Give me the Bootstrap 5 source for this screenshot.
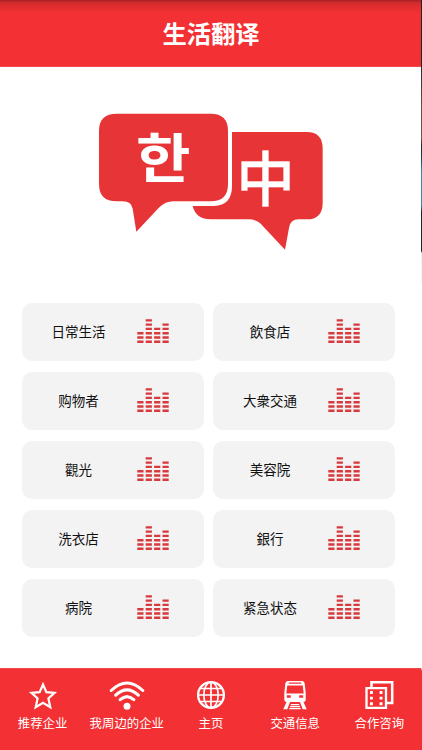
<!DOCTYPE html>
<html lang="zh-CN">
<head>
<meta charset="utf-8">
<meta name="viewport" content="width=device-width, initial-scale=1">
<title>生活翻译</title>
<link href="https://cdn.jsdelivr.net/npm/bootstrap@5.3.0/dist/css/bootstrap.min.css" rel="stylesheet">
<style>
body{font-family:"Noto Sans CJK SC",sans-serif;width:422px;height:750px;color:#111}
.screen{width:421px}
.edge{width:1px;background:linear-gradient(#222 0,#222 60px,#5a4c3c 100px,#6b5c42 138px,#222 146px,#244 158px,#3a8ea8 172px,#3a8ea8 205px,#222 212px,#222 251px,#e8f0f2 253px,#f4f6f6 282px,#fff 283px,#fff 668px,#f33033 671px)}
.topbar{height:67px;background:linear-gradient(#a61f24 0,#c8292c 2px,#dc2c2f 5px,#f33033 13px);border-bottom:1px solid #f0484b}
.topbar h1{font-size:24.3px;line-height:36px;padding-left:1px}
.hero{width:240px;height:160px;margin:33px 0 0 90px}
.tiles{display:grid;grid-template-columns:182px 182px;gap:11px 9.5px;margin:43.3px 0 0 21.5px}
.tile{height:58px;border-radius:10px;background:#f3f3f3;padding-bottom:2px}
.tile span{width:114px;font-size:13.5px;line-height:20px}
.tile svg{width:32px;height:24px;margin-left:1px}
.tabs{height:82px;background:#f33033;border-top:1px solid #f0484b;color:#fff}
.tabs a{width:20%;padding:11px 0 0 1px;font-size:12.4px;line-height:18px}
.tabs svg{width:40px;height:32px;margin-bottom:2px}
</style>
<script src="https://cdn.jsdelivr.net/npm/bootstrap@5.3.0/dist/js/bootstrap.bundle.min.js"></script>
</head>
<body class="d-flex overflow-hidden bg-white">
<svg width="0" height="0" class="position-absolute">
 <defs>
  <symbol id="eq" viewBox="0 0 32 24">
   <g stroke="#d8393c" stroke-width="6.2" fill="none" stroke-dasharray="2.4 1.86">
    <path d="M3.4 23.9V12.4M11.8 23.9V0M20.2 23.9V8.2M28.6 23.9V4"/>
   </g>
  </symbol>
 </defs>
</svg>
<div class="screen d-flex flex-column">
 <header class="topbar d-flex align-items-center justify-content-center flex-shrink-0">
  <h1 class="text-white fw-bold m-0">生活翻译</h1>
 </header>
 <svg class="hero flex-shrink-0" viewBox="0 0 720 480">
  <g fill="#e73537">
   <path d="M426 96H650Q698 96 698 146V308Q698 358 650 358H626Q600 358 597 384L585 449L519 379Q502 358 476 358H362Q318 358 308 318H372Q426 316 426 258Z"/>
   <path d="M80 41H362Q414 41 414 93V252Q414 304 362 304H250Q226 304 208 322L139 395L128 326Q124 304 98 304H80Q27 304 27 252V93Q27 41 80 41Z"/>
  </g>
  <text transform="translate(220 234) scale(1.04 .94)" text-anchor="middle" fill="#fff" font-size="171" font-weight="700" font-family="'Noto Sans CJK KR',sans-serif">한</text>
  <text x="527" y="303" text-anchor="middle" fill="#fff" font-size="176" font-weight="500" font-family="'Noto Sans CJK KR',sans-serif" stroke="#fff" stroke-width="1">中</text>
 </svg>
 <main class="tiles">
  <div class="tile d-flex align-items-center"><span class="text-center">日常生活</span><svg><use href="#eq"/></svg></div>
  <div class="tile d-flex align-items-center"><span class="text-center">飲食店</span><svg><use href="#eq"/></svg></div>
  <div class="tile d-flex align-items-center"><span class="text-center">购物者</span><svg><use href="#eq"/></svg></div>
  <div class="tile d-flex align-items-center"><span class="text-center">大衆交通</span><svg><use href="#eq"/></svg></div>
  <div class="tile d-flex align-items-center"><span class="text-center">觀光</span><svg><use href="#eq"/></svg></div>
  <div class="tile d-flex align-items-center"><span class="text-center">美容院</span><svg><use href="#eq"/></svg></div>
  <div class="tile d-flex align-items-center"><span class="text-center">洗衣店</span><svg><use href="#eq"/></svg></div>
  <div class="tile d-flex align-items-center"><span class="text-center">銀行</span><svg><use href="#eq"/></svg></div>
  <div class="tile d-flex align-items-center"><span class="text-center">病院</span><svg><use href="#eq"/></svg></div>
  <div class="tile d-flex align-items-center"><span class="text-center">紧急状态</span><svg><use href="#eq"/></svg></div>
 </main>
 <nav class="tabs d-flex mt-auto flex-shrink-0">
  <a class="d-flex flex-column align-items-center text-white text-decoration-none text-nowrap">
   <svg viewBox="0 0 40 32" fill="none" stroke="#fff" stroke-width="2.2"><path d="M20 4.500L23.400 12.100L31.500 12.900L25.400 18.400L27.300 27.300L20 22.800L12.700 27.300L14.600 18.400L8.500 12.900L16.600 12.100Z"/></svg>推荐企业</a>
  <a class="d-flex flex-column align-items-center text-white text-decoration-none text-nowrap">
   <svg viewBox="0 0 40 32" fill="none" stroke="#fff" stroke-width="3" stroke-linecap="round"><path d="M4.200 10.500Q20-4.500 35.800 10.500M8.700 15.200Q20 4.500 31.300 15.200M13.200 19.700Q20 13.500 26.800 19.700"/><circle cx="20" cy="26.200" r="3.500" fill="#fff" stroke="none"/></svg>我周边的企业</a>
  <a class="d-flex flex-column align-items-center text-white text-decoration-none text-nowrap">
   <svg viewBox="0 0 40 32" fill="none" stroke="#fff" stroke-width="1.7"><circle cx="20" cy="15" r="12.900" stroke-width="2.300"/><ellipse cx="20" cy="15" rx="7.200" ry="12.900"/><path d="M20 2.200V27.800M7.200 15H32.800M9.600 8.500H30.400M9.600 21.500H30.400"/></svg>主页</a>
  <a class="d-flex flex-column align-items-center text-white text-decoration-none text-nowrap">
   <svg viewBox="0 0 40 32" fill="#fff"><path fill-rule="evenodd" d="M12.500 1H27.500Q29.300 1 29.700 3.500L30.700 13V19.500Q30.700 22 28 22H12Q9.300 22 9.300 19.500V13L10.300 3.500Q10.700 1 12.500 1ZM13.700 2.500V3.700H26.300V2.500ZM12.300 5.500L11.300 13.500H28.700L27.700 5.500ZM11.800 15.300V17.800H15.800V15.300ZM24.200 15.300V17.800H28.200V15.300Z"/><path d="M11.500 22H15L12.300 29.300H8.300ZM25 22H28.500L31.700 29.300H27.700ZM15.700 23.900H24.300V25.200H15.700ZM15 26H25V27.300H15ZM14.300 28.100H25.700V29.300H14.300Z"/></svg>交通信息</a>
  <a class="d-flex flex-column align-items-center text-white text-decoration-none text-nowrap">
   <svg viewBox="0 0 40 32" fill="none" stroke="#fff" stroke-width="2.500"><path d="M12.500 7.500V2.200H33.200V23H28"/><path d="M7.500 8.100H27V27.900H7.500Z" stroke-width="2.300"/><path fill="#fff" stroke="none" d="M11 11.100H13.900V14H11ZM20.600 11.100H23.500V14H20.600ZM11 16.700H13.900V19.600H11ZM20.600 16.700H23.500V19.600H20.600ZM11 22.300H13.900V25.200H11ZM20.600 22.300H23.500V25.200H20.600Z"/></svg>合作咨询</a>
 </nav>
</div>
<div class="edge"></div>
</body>
</html>
